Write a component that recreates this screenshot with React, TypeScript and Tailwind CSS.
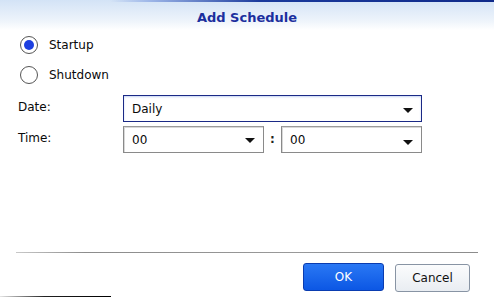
import React from "react";

const Arrow = () => (
  <svg width="10" height="5" viewBox="0 0 10 5" className="shrink-0">
    <polygon points="0,0 10,0 5,5" fill="#111" />
  </svg>
);

interface SelectProps {
  value: string;
  width: string;
  focused?: boolean;
  arrowOffset?: string;
}

const Select = ({ value, width, focused, arrowOffset }: SelectProps) => {
  return (
    <div
      className={
        focused
          ? `${width} h-[27px] flex items-center justify-between pl-[8px] pr-[8px] border-[1.5px] border-[#1b2a86] bg-white shadow-[inset_0_1px_2px_rgba(90,130,220,0.35)]`
          : `${width} h-[27px] flex items-center justify-between pl-[8px] pr-[8px] border border-[#8a8a8a] border-t-[#9a9a9a] bg-white shadow-[inset_1px_1px_0_#d8d8d8]`
      }
    >
      <span className="text-[12px] text-[#0a0a0a] leading-none">{value}</span>
      <span className={arrowOffset}>
        <Arrow />
      </span>
    </div>
  );
};

const Radio = ({ checked, label }: { checked?: boolean; label: string }) => (
  <div className="h-[30px] flex items-center pl-[20px] gap-[11px]">
    <div className="w-[18px] h-[18px] rounded-full border border-[#555] bg-white flex items-center justify-center">
      {checked ? <div className="w-[10px] h-[10px] rounded-full bg-[#1c3fe0]" /> : null}
    </div>
    <span className="text-[12px] text-[#0a0a0a] leading-none">{label}</span>
  </div>
);

export default function App() {
  return (
    <div
      className="w-[494px] h-[297px] bg-white overflow-hidden flex flex-col"
      style={{ fontFamily: '"DejaVu Sans", Verdana, sans-serif' }}
    >
      <div className="bg-[linear-gradient(to_bottom,#d3e3f6,#eef4fb_70%,#ffffff)]">
        <div className="h-[2px] bg-[linear-gradient(to_right,transparent_110px,#9db6e8_150px,#1a3a9c_260px,#0f2a8a)]" />
        <div className="h-[28px] flex items-center justify-center">
          <span className="text-[13px] font-bold text-[#1b2f9e] leading-none mt-[2px]">
            Add Schedule
          </span>
        </div>
      </div>

      <Radio checked label="Startup" />
      <Radio label="Shutdown" />

      <div className="mt-[5px] flex items-start">
        <span className="w-[123px] shrink-0 pl-[18px] pt-[6px] text-[12px] text-[#0a0a0a] leading-none">Date:</span>
        <Select value="Daily" width="w-[299px]" focused arrowOffset="mt-[4px]" />
      </div>

      <div className="mt-[4px] flex items-start">
        <span className="w-[123px] shrink-0 pl-[18px] pt-[6px] text-[12px] text-[#0a0a0a] leading-none">Time:</span>
        <Select value="00" width="w-[141px]" arrowOffset="mt-[2px]" />
        <span className="w-[17px] text-center text-[12px] font-bold text-[#222] pt-[7px] leading-none">:</span>
        <Select value="00" width="w-[141px]" arrowOffset="mt-[6px]" />
      </div>

      <div className="mt-[99px] mx-[16px] h-[1px] bg-[linear-gradient(to_right,#c8c8c8,#8c8c8c_15%,#999_60%,#8c8c8c)]" />

      <div className="mt-[10px] flex justify-end gap-[11px] pr-[24px]">
        <button className="w-[81px] h-[28px] rounded-[3px] border border-[#0a3cb0] bg-[linear-gradient(to_bottom,#2a78f4,#0c57e4)] text-white text-[12px] leading-none">
          OK
        </button>
        <button className="w-[75px] h-[28px] mt-[1px] rounded-[3px] border border-[#8894a4] bg-[linear-gradient(to_bottom,#fbfcfd,#e9edf2)] text-[#111] text-[12px] leading-none">
          Cancel
        </button>
      </div>

      <div className="mt-[4px] w-[111px] h-[1px] bg-[linear-gradient(to_right,#e5e5e5,#222_40%,#000)]" />
    </div>
  );
}
